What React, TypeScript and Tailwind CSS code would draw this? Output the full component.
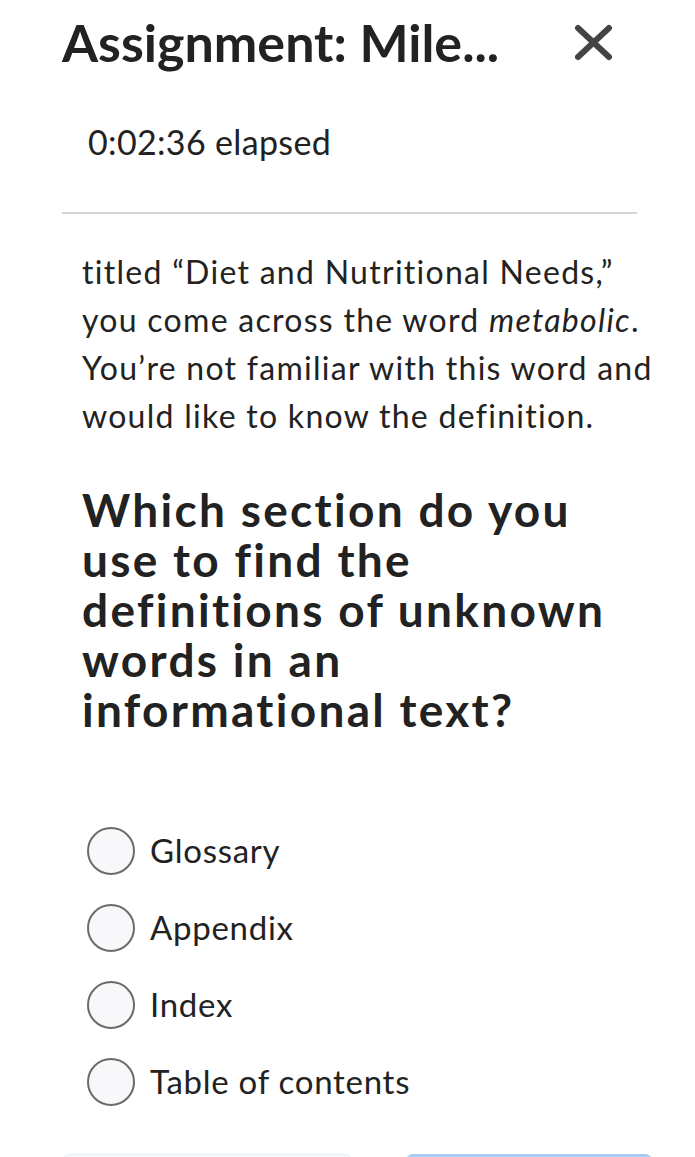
import React from 'react';

const options = ['Glossary', 'Appendix', 'Index', 'Table of contents'];

const CloseIcon: React.FC = () => (
  <svg width="40" height="40" viewBox="0 0 40 40" fill="none">
    <path d="M5 6 L36 35 M36 6 L5 35" stroke="#444444" strokeWidth="6" strokeLinecap="round" />
  </svg>
);

export default function App() {
  return (
    <div className="h-screen bg-white text-[#222222] font-['Lato','Liberation_Sans',sans-serif] [font-variant-ligatures:none] overflow-hidden">
      {/* Header */}
      <div className="flex items-center pt-[11px] pl-[62px] pr-[82px]">
        <h1 className="text-[52px] leading-[1.2] font-bold whitespace-nowrap">Assignment: Mile...</h1>
        <div className="ml-auto">
          <CloseIcon />
        </div>
      </div>

      <p className="mt-[49px] pl-[88px] text-[34px] leading-[1.2] tracking-[0.01em]">0:02:36 elapsed</p>

      <div className="mt-[49px] ml-[62px] w-[575px] h-[2px] bg-[#d6d6d6]" />

      {/* Passage + question */}
      <div className="pl-[82px]">
        <p className="mt-[34px] w-[580px] text-[32px] leading-[48px] tracking-[0.04em]">
          titled “Diet and Nutritional Needs,” you come across the word <em>metabolic</em>. You’re not
          familiar with this word and would like to know the definition.
        </p>

        <h2 className="mt-[45px] w-[555px] text-[46px] leading-[50px] font-bold tracking-[0.05em]">
          Which section do you use to find the definitions of unknown words in an informational text?
        </h2>
      </div>

      {/* Answer choices */}
      <div className="mt-[92px] pl-[87px] flex flex-col gap-[29px]">
        {options.map((opt) => (
          <label key={opt} className="flex items-center gap-[15px]">
            <span className="w-12 h-12 rounded-full border-2 border-[#6b6b6b] bg-[#f8f8fb]" />
            <span className="text-[33px] leading-[1.2] tracking-[0.022em]">{opt}</span>
          </label>
        ))}
      </div>

      {/* Footer buttons */}
      <div className="mt-[48px] pl-[62px] flex gap-[52px]">
        <button className="w-[291px] h-[64px] rounded-lg border border-[#e2eefa] bg-[#f4f9fe]" />
        <button className="w-[248px] h-[64px] rounded-lg border border-[#a6cbf3] bg-[#a9cdf4]" />
      </div>
    </div>
  );
}
